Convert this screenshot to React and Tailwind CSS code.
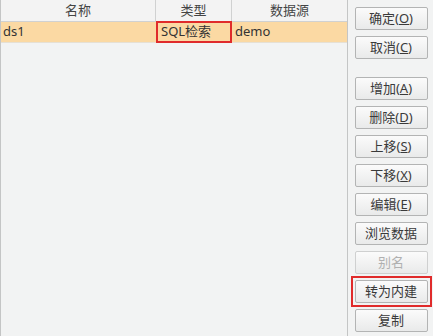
import React from "react";

/* ── button with underlined mnemonic ── */
function Btn({ label, hotkey, disabled = false, marked = false }) {
  const inner = (
    <button
      type="button"
      className={`w-[73px] h-[23px] flex items-center justify-center rounded-[2px] border text-[13px] leading-none bg-gradient-to-b from-[#fbfbfb] to-[#e9eaea] ${
        disabled ? "border-[#cfd0d0] text-[#b0b0b0]" : "border-[#b3b4b4] text-[#3a3a3a]"
      }`}
    >
      {label}
      {hotkey && (
        <span>
          (<span className="underline">{hotkey}</span>)
        </span>
      )}
    </button>
  );
  if (!marked) return inner;
  return <div className="border-2 border-[#e02b2b] p-[2px] -m-[4px]">{inner}</div>;
}

const topButtons = [
  { label: "确定", hotkey: "O" },
  { label: "取消", hotkey: "C" },
];

const listButtons = [
  { label: "增加", hotkey: "A" },
  { label: "删除", hotkey: "D" },
  { label: "上移", hotkey: "S" },
  { label: "下移", hotkey: "X" },
  { label: "编辑", hotkey: "E" },
  { label: "浏览数据" },
  { label: "别名", disabled: true },
  { label: "转为内建", marked: true },
  { label: "复制" },
];

export default function App() {
  return (
    <div
      className="w-[433px] h-[336px] flex bg-[#f2f3f3] text-[#333] overflow-hidden"
      style={{ fontFamily: '"Noto Sans", "Noto Sans CJK SC", sans-serif' }}
    >
      {/* ── table ── */}
      <div className="w-[348px] h-full border-l border-r border-[#c4c5c5] flex flex-col">
        <div className="flex h-[22px] border-b border-[#d0d1d1] bg-[#f3f3f3] text-[13px] text-[#444]">
          <div className="w-[155px] flex items-center justify-center border-r border-[#d0d1d1]">名称</div>
          <div className="w-[76px] flex items-center justify-center border-r border-[#d0d1d1]">类型</div>
          <div className="flex-1 flex items-center justify-center">数据源</div>
        </div>
        <div className="flex h-[21px] bg-[#fbd9a3] text-[13px] border-b border-[#e6e0d4]">
          <div className="w-[155px] flex items-center pl-[2px]">ds1</div>
          <div className="w-[76px] flex items-center pl-[3px] border-2 border-[#e02b2b] -my-px">SQL检索</div>
          <div className="flex-1 flex items-center pl-[3px]">demo</div>
        </div>
      </div>

      {/* ── buttons ── */}
      <div className="flex-1 flex flex-col items-center pt-[7px] pl-[1px]">
        <div className="flex flex-col gap-[6px]">
          {topButtons.map((b) => (
            <Btn key={b.label} {...b} />
          ))}
        </div>
        <div className="flex flex-col gap-[6px] mt-[18px]">
          {listButtons.map((b) => (
            <Btn key={b.label} {...b} />
          ))}
        </div>
      </div>
    </div>
  );
}
